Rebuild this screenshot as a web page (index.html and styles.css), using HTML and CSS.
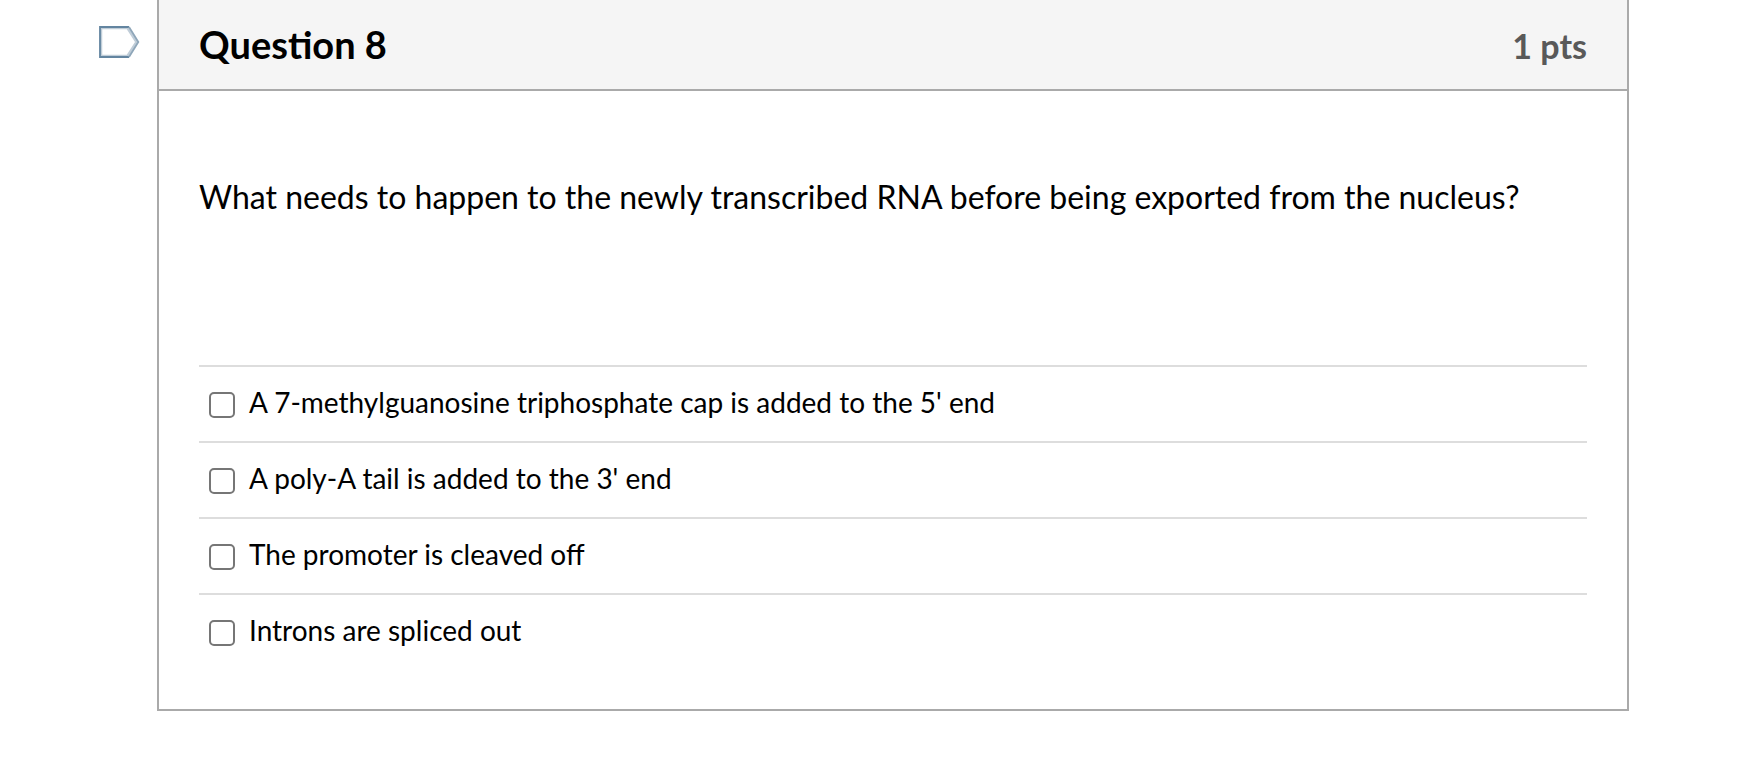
FILE: index.html
```html
<!DOCTYPE html>
<html lang="en">
<head>
    <meta charset="UTF-8">
    <meta name="viewport" content="width=device-width, initial-scale=1.0">
    <title>Quiz</title>
    <link rel="stylesheet" href="styles.css">
</head>
<body>
    <main class="quiz">
        <button type="button" class="flag-question" aria-label="Flag question 8">
            <svg width="42" height="34" viewBox="0 0 42 34" fill="none">
                <path d="M3 3H29.500L38.500 17L29.500 31H3Z" stroke="#c0cdd8" stroke-width="2.500"/>
                <path d="M31 2H2V32H31" stroke="#6385a0" stroke-width="1.800"/>
                <path d="M31 2L40.300 17L31 32" stroke="#8ea6b9" stroke-width="1.800"/>
            </svg>
        </button>

        <form class="question">
            <div class="header">
                <h2 class="question-name">Question 8</h2>
                <span class="question-points">1 pts</span>
            </div>

            <div class="text">
                <p class="question-text" id="question8">What needs to happen to the newly transcribed RNA before being exported from the nucleus?</p>

                <div class="answers" role="group" aria-labelledby="question8">
                    <div class="answer">
                        <input type="checkbox" id="answer1" name="answer1">
                        <label for="answer1">A 7-methylguanosine triphosphate cap is added to the 5' end</label>
                    </div>
                    <div class="answer">
                        <input type="checkbox" id="answer2" name="answer2">
                        <label for="answer2">A poly-A tail is added to the 3' end</label>
                    </div>
                    <div class="answer">
                        <input type="checkbox" id="answer3" name="answer3">
                        <label for="answer3">The promoter is cleaved off</label>
                    </div>
                    <div class="answer">
                        <input type="checkbox" id="answer4" name="answer4">
                        <label for="answer4">Introns are spliced out</label>
                    </div>
                </div>
            </div>
        </form>
    </main>
</body>
</html>
```
FILE: styles.css
```css
* {
    margin: 0;
    padding: 0;
    box-sizing: border-box;
}

body {
    font-family: Lato, "Liberation Sans", sans-serif;
    font-size: 28px;
    line-height: 40px;
    color: #000;
    background: #fff;
}

.quiz {
    display: flex;
    align-items: flex-start;
    padding: 0 124px 0 98px;
}

.flag-question {
    flex: none;
    width: 42px;
    height: 34px;
    margin: 25px 17px 0 0;
    border: none;
    background: none;
    cursor: pointer;
}

.flag-question svg {
    display: block;
}

.question {
    flex: 1;
    border: 2px solid #aaa;
    border-top: none;
}

.header {
    display: flex;
    align-items: baseline;
    justify-content: space-between;
    padding: 24px 40px 25px;
    background: #f5f5f5;
    border-bottom: 2px solid #aaa;
}

.question-name {
    font-size: 38px;
    font-weight: bold;
}

.question-points {
    font-size: 34px;
    font-weight: bold;
    line-height: 36px;
    color: #595959;
}

.text {
    padding: 86px 40px 40px;
}

.question-text {
    margin-bottom: 148px;
    font-size: 32px;
}

.answer {
    display: flex;
    align-items: flex-start;
    padding: 15px 10px 19px;
    border-top: 2px solid #ddd;
}

.answer input {
    appearance: none;
    flex: none;
    width: 26px;
    height: 26px;
    margin: 10px 14px 0 0;
    border: 2px solid #767676;
    border-radius: 5px;
    background: #fff;
}

.answer input:checked {
    background: #0374b5;
    border-color: #0374b5;
}
```
